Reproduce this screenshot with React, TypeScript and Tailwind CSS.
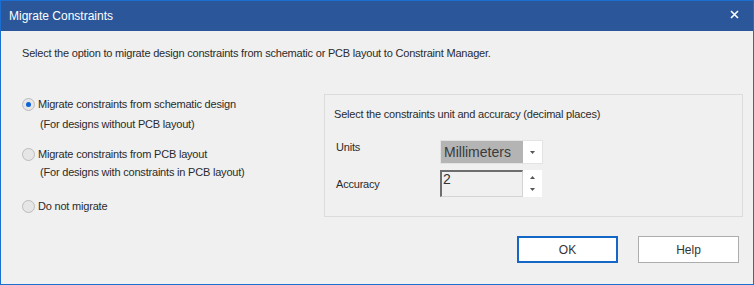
import React from "react";

function Radio({ checked }: { checked?: boolean }) {
  return (
    <span className="flex h-[13px] w-[13px] shrink-0 items-center justify-center rounded-full border border-[#bcbcbc] bg-[#e6e6e6]">
      {checked && <span className="h-[5px] w-[5px] rounded-full bg-[#0c63d6]" />}
    </span>
  );
}

function Row({ children, className = "" }: { children: React.ReactNode; className?: string }) {
  return <div className={`flex h-[16px] items-center gap-[3px] ${className}`}>{children}</div>;
}

export default function App() {
  return (
    <div
      className="flex h-[285px] w-[754px] flex-col border border-[#1b6fd0] bg-[#f0f0f0] text-[11px] tracking-[-0.2px] text-[#2b2b2b]"
      style={{ fontFamily: '"Liberation Sans", Arial, sans-serif' }}
    >
      <div className="flex h-[30px] shrink-0 items-center justify-between bg-[#2b579a] pl-[8px] pr-[14px] text-[12px] tracking-normal text-white">
        <span>Migrate Constraints</span>
        <svg width="9" height="9" viewBox="0 0 9 9" className="-mt-[4px]">
          <path d="M1 1L8 8M8 1L1 8" stroke="white" strokeWidth="1.6" />
        </svg>
      </div>

      <div className="ml-[21px] mt-[14px] leading-[16px]">
        Select the option to migrate design constraints from schematic or PCB layout to Constraint Manager.
      </div>

      <div className="mt-[33px] flex">
        <div className="ml-[21px] flex w-[302px] flex-col pt-[2px]">
          <Row>
            <Radio checked />
            <span>Migrate constraints from schematic design</span>
          </Row>
          <Row className="mt-[4px] pl-[18px]">(For designs without PCB layout)</Row>
          <Row className="mt-[14px]">
            <Radio />
            <span>Migrate constraints from PCB layout</span>
          </Row>
          <Row className="mt-[2px] pl-[18px]">(For designs with constraints in PCB layout)</Row>
          <Row className="mt-[18px]">
            <Radio />
            <span>Do not migrate</span>
          </Row>
        </div>

        <div className="flex h-[123px] w-[419px] flex-col border border-[#dcdcdc] pl-[9px]">
          <div className="mt-[11px] leading-[16px]">Select the constraints unit and accuracy (decimal places)</div>
          <div className="mt-[18px] flex items-start">
            <span className="mt-[-1px] w-[106px] pl-[2px] leading-[16px]">Units</span>
            <div className="flex h-[24px] w-[103px] border border-[#e3e3e3] bg-white">
              <div className="flex flex-1 items-center bg-[#b4b4b4] pl-[3px] text-[14px] tracking-normal text-[#3a3a3a]">
                Millimeters
              </div>
              <div className="flex w-[19px] items-center justify-center">
                <svg width="5" height="3" viewBox="0 0 5 3">
                  <path d="M0 0H5L2.5 3Z" fill="#555" />
                </svg>
              </div>
            </div>
          </div>
          <div className="mt-[6px] flex items-center">
            <span className="w-[106px] pl-[2px] leading-[16px]">Accuracy</span>
            <div className="flex h-[27px] w-[102px]">
              <div className="flex-1 border-b border-l-2 border-r border-t-2 border-[#6e6e6e] border-b-[#d4d4d4] border-r-[#d4d4d4] bg-[#f0f0f0] pl-[1px] text-[14px] leading-[15px] tracking-normal text-[#333]">
                2
              </div>
              <div className="flex w-[19px] flex-col items-center justify-center gap-[9px] bg-white">
                <svg width="5" height="3" viewBox="0 0 5 3">
                  <path d="M0 3H5L2.5 0Z" fill="#555" />
                </svg>
                <svg width="5" height="3" viewBox="0 0 5 3">
                  <path d="M0 0H5L2.5 3Z" fill="#555" />
                </svg>
              </div>
            </div>
          </div>
        </div>
      </div>

      <div className="mt-[19px] flex justify-end gap-[20px] pr-[14px]">
        <button className="h-[27px] w-[101px] border-2 border-[#1467c7] bg-white text-[12px] tracking-normal text-[#333]">
          OK
        </button>
        <button className="h-[27px] w-[101px] border border-[#adadad] bg-white text-[12px] tracking-normal text-[#333]">
          Help
        </button>
      </div>
    </div>
  );
}
